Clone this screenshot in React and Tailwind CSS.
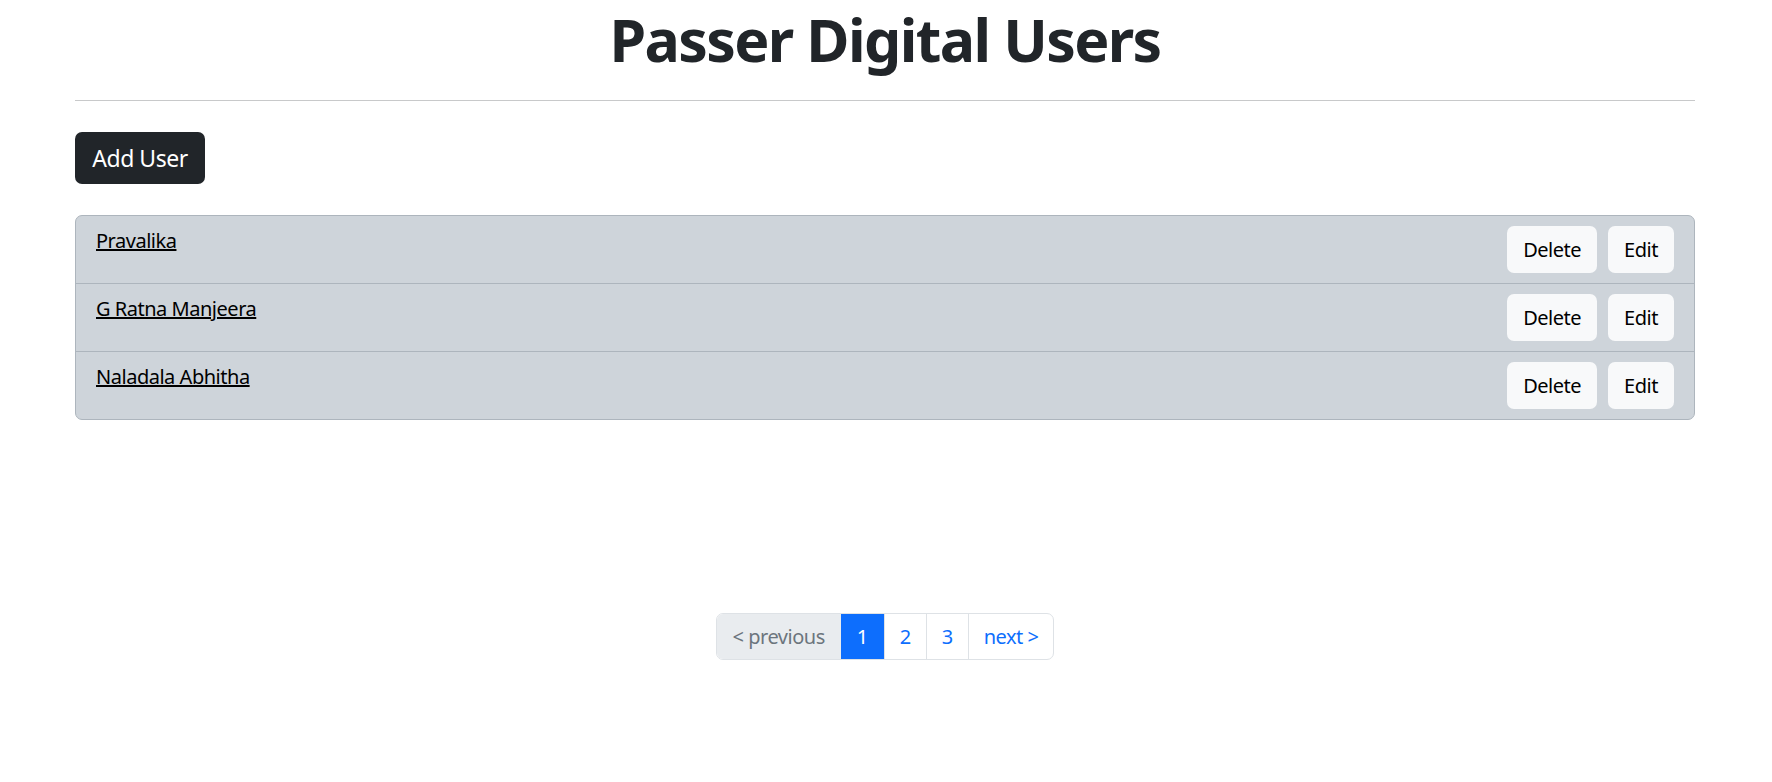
import React from "react";

const users = ["Pravalika", "G Ratna Manjeera", "Naladala Abhitha"];

export default function App() {
  return (
    <div
      className="min-h-screen bg-white pl-[75px] pr-[77px] tracking-[-0.03em] text-[#212529]"
      style={{ fontFamily: '"Noto Sans", "Open Sans", sans-serif' }}
    >
      <h1 className="pt-[3px] text-center text-[59px] font-bold leading-[72px] tracking-[-1.6px]">Passer Digital Users</h1>
      <hr className="mt-[25px] border-t border-[#c8c9ca]" />

      <button className="mt-[31px] h-[52px] w-[130px] rounded-[7px] bg-[#212529] text-[23px] text-white">Add User</button>

      {/* users list */}
      <ul className="mt-[31px] rounded-[7px] border border-[#adb5bd] bg-[#ced4da]">
        {users.map((name, i) => (
          <li
            key={name}
            className={
              "flex items-start justify-between px-[20px] py-[10px] " +
              (i > 0 ? "border-t border-[#adb5bd]" : "")
            }
          >
            <a href="#" className="text-[20px] leading-[30px] text-[#000] underline">
              {name}
            </a>
            <div className="flex gap-[11px]">
              <button className="h-[47px] rounded-[7px] bg-[#f8f9fa] px-[16px] text-[20px] text-black">Delete</button>
              <button className="h-[47px] rounded-[7px] bg-[#f8f9fa] px-[16px] text-[20px] text-black">Edit</button>
            </div>
          </li>
        ))}
      </ul>

      <div className="mt-[193px] flex justify-center">
        <nav className="flex h-[47px] overflow-hidden rounded-[7px] border border-[#dee2e6] text-[20px]">
          <span className="flex items-center bg-[#e9ecef] px-[16px] text-[#6c757d]">&lt; previous</span>
          <span className="flex items-center bg-[#0d6efd] px-[16px] text-white">1</span>
          <span className="flex items-center border-l border-[#dee2e6] px-[15px] text-[#0d6efd]">2</span>
          <span className="flex items-center border-l border-[#dee2e6] px-[15px] text-[#0d6efd]">3</span>
          <span className="flex items-center border-l border-[#dee2e6] px-[15px] text-[#0d6efd]">next &gt;</span>
        </nav>
      </div>
    </div>
  );
}
